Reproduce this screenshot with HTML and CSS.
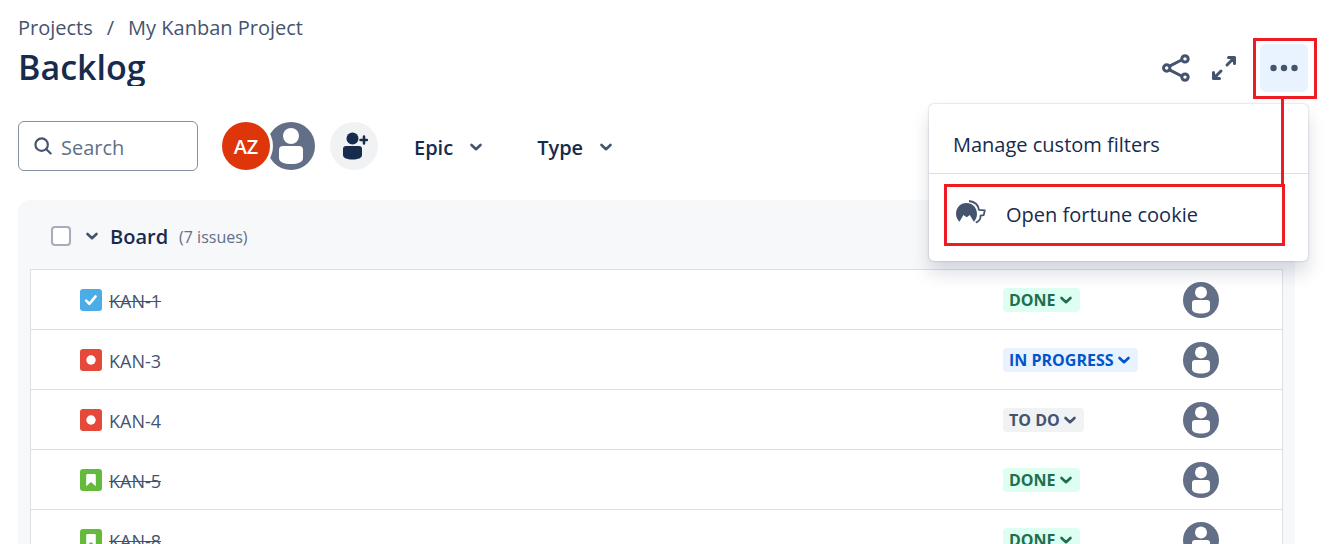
FILE: index.html
```html
<!DOCTYPE html>
<html lang="en">
<head>
<meta charset="utf-8">
<meta name="viewport" content="width=device-width, initial-scale=1">
<title>Backlog - My Kanban Project</title>
<link rel="stylesheet" href="styles.css">
</head>
<body>
<svg class="sprite" aria-hidden="true">
  <symbol id="chevron" viewBox="0 0 14 10"><path d="M2.5 3 7 7.2 11.5 3" fill="none" stroke="currentColor" stroke-width="2.6" stroke-linecap="round" stroke-linejoin="round"/></symbol>
  <symbol id="person" viewBox="0 0 48 48"><circle cx="24" cy="24" r="24" fill="#626f86"/><circle cx="24" cy="14" r="8" fill="#fff"/><path d="M16 24h16a4 4 0 0 1 4 4v8c0 4-5 6-12 6s-12-2-12-6v-8a4 4 0 0 1 4-4z" fill="#fff"/></symbol>
  <symbol id="task" viewBox="0 0 22 22"><rect width="22" height="22" rx="3" fill="#4bade8"/><path d="m6.2 11.6 3.2 3.2 6.2-7.4" fill="none" stroke="#fff" stroke-width="2.6" stroke-linecap="round" stroke-linejoin="round"/></symbol>
  <symbol id="bug" viewBox="0 0 22 22"><rect width="22" height="22" rx="3" fill="#e5493a"/><circle cx="11" cy="11" r="4.7" fill="#fff"/></symbol>
  <symbol id="story" viewBox="0 0 22 22"><rect width="22" height="22" rx="3" fill="#63ba3c"/><path d="M7.5 5h7a1.3 1.3 0 0 1 1.3 1.3V17.2L11 13l-4.8 4.2V6.3A1.3 1.3 0 0 1 7.5 5z" fill="#fff"/></symbol>
</svg>

<main class="page">
  <nav class="breadcrumbs" aria-label="Breadcrumbs">
    <a href="#">Projects</a><span>/</span><a href="#">My Kanban Project</a>
  </nav>

  <header class="header">
    <h1 class="title">Backlog</h1>
    <div class="actions">
      <button class="icon-button" aria-label="Share">
        <svg width="30" height="30" viewBox="0 0 30 30" fill="none" stroke="currentColor" stroke-width="3"><path d="M8 13.4 20.6 7M8 16.6 20.6 23"/><circle cx="5.7" cy="15" r="3.2"/><circle cx="24" cy="5.9" r="3.2"/><circle cx="24" cy="24.1" r="3.2"/></svg>
      </button>
      <button class="icon-button" aria-label="Full screen">
        <svg width="26" height="26" viewBox="0 0 26 26" fill="none" stroke="currentColor" stroke-width="3" stroke-linecap="round" stroke-linejoin="round"><path d="M17.500 2.500h6v6M23 3l-7 7M8.500 23.500h-6v-6M3 23l7-7"/><path d="M19 3h4v4zM3 19v4h4z" fill="currentColor" stroke-width="1"/></svg>
      </button>
      <div class="more">
        <button class="icon-button more-button" aria-label="More actions" aria-expanded="true">
          <svg width="28" height="8" viewBox="0 0 28 8" fill="currentColor"><circle cx="3.5" cy="4" r="3.2"/><circle cx="14" cy="4" r="3.2"/><circle cx="24.5" cy="4" r="3.2"/></svg>
        </button>
        <div class="menu">
          <button class="menu-item">Manage custom filters</button>
          <div class="menu-group">
            <button class="menu-item highlighted">
              <svg width="32" height="28" viewBox="0 -2 32 28"><path d="M4.500 19.700C2.500 18 1 15 1 12 1 5.500 5.500 1 11.500 1S22 5.500 22 12c0 3.200-1.200 5.800-3.200 7.700L14.800 13l-3.100 2.200L8.400 13z" fill="#44546f"/><path d="M14-1C19.500-.3 23.300 3 23.900 7.800l5.900.6-1.100 4.700-3.200.6c.3 3-1.500 5.800-4.700 7" fill="none" stroke="#44546f" stroke-width="1.800" stroke-linejoin="round"/></svg>
              <span>Open fortune cookie</span>
            </button>
          </div>
        </div>
      </div>
    </div>
  </header>

  <div class="toolbar">
    <label class="search">
      <svg width="18" height="18" viewBox="0 0 20 20" fill="none" stroke="currentColor" stroke-width="2.4" stroke-linecap="round"><circle cx="8.500" cy="8.500" r="6.900"/><path d="m13.700 13.700 4.800 4.600"/></svg>
      <input type="text" placeholder="Search" aria-label="Search">
    </label>
    <div class="avatars">
      <button class="avatar initials" aria-label="AZ">AZ</button>
      <button class="avatar stacked" aria-label="Unassigned"><svg width="48" height="48"><use href="#person"/></svg></button>
    </div>
    <button class="avatar add" aria-label="Add people">
      <svg width="28" height="28" viewBox="0 0 28 28" fill="currentColor"><circle cx="12.500" cy="6.500" r="6"/><path d="M6 14h13a3 3 0 0 1 3 3v6c0 3-4 4.500-9.500 4.500S3 26 3 23v-6a3 3 0 0 1 3-3z"/><path d="M24 4.500v7M20.500 8h6.500" stroke="currentColor" stroke-width="2.500" stroke-linecap="round"/></svg>
    </button>
    <div class="filters">
      <button class="filter">Epic <svg width="14" height="10"><use href="#chevron"/></svg></button>
      <button class="filter">Type <svg width="14" height="10"><use href="#chevron"/></svg></button>
    </div>
  </div>

  <section class="board">
    <div class="board-header">
      <input class="check" type="checkbox" aria-label="Select all board issues">
      <button class="collapse" aria-label="Collapse board"><svg width="14" height="10"><use href="#chevron"/></svg></button>
      <h2 class="board-title">Board</h2>
      <span class="count">(7 issues)</span>
    </div>
    <ul class="issues">
      <li class="issue">
        <svg width="22" height="22"><use href="#task"/></svg><a class="key closed" href="#">KAN-1</a>
        <div class="status-cell"><button class="status done">DONE <svg width="14" height="10"><use href="#chevron"/></svg></button></div>
        <svg class="assignee" width="36" height="36"><use href="#person"/></svg>
      </li>
      <li class="issue">
        <svg width="22" height="22"><use href="#bug"/></svg><a class="key" href="#">KAN-3</a>
        <div class="status-cell"><button class="status progress">IN PROGRESS <svg width="14" height="10"><use href="#chevron"/></svg></button></div>
        <svg class="assignee" width="36" height="36"><use href="#person"/></svg>
      </li>
      <li class="issue">
        <svg width="22" height="22"><use href="#bug"/></svg><a class="key" href="#">KAN-4</a>
        <div class="status-cell"><button class="status todo">TO DO <svg width="14" height="10"><use href="#chevron"/></svg></button></div>
        <svg class="assignee" width="36" height="36"><use href="#person"/></svg>
      </li>
      <li class="issue">
        <svg width="22" height="22"><use href="#story"/></svg><a class="key closed" href="#">KAN-5</a>
        <div class="status-cell"><button class="status done">DONE <svg width="14" height="10"><use href="#chevron"/></svg></button></div>
        <svg class="assignee" width="36" height="36"><use href="#person"/></svg>
      </li>
      <li class="issue">
        <svg width="22" height="22"><use href="#story"/></svg><a class="key closed" href="#">KAN-8</a>
        <div class="status-cell"><button class="status done">DONE <svg width="14" height="10"><use href="#chevron"/></svg></button></div>
        <svg class="assignee" width="36" height="36"><use href="#person"/></svg>
      </li>
    </ul>
  </section>
</main>
</body>
</html>
```
FILE: styles.css
```css
* { box-sizing: border-box; }

body {
  margin: 0;
  height: 100vh;
  overflow: hidden;
  background: #fff;
  color: #172b4d;
  font-family: "Open Sans", "Noto Sans", sans-serif;
  font-size: 20px;
}

button {
  margin: 0;
  padding: 0;
  border: 0;
  background: none;
  color: inherit;
  font: inherit;
}

a { color: inherit; text-decoration: none; }

svg { flex: none; display: block; }

.sprite { position: absolute; width: 0; height: 0; }

.page { padding: 14px 22px 0 18px; }

.breadcrumbs {
  display: flex;
  gap: 14px;
  line-height: 28px;
  color: #44546f;
}

.header {
  display: flex;
  justify-content: space-between;
  align-items: center;
  height: 48px;
  margin-top: 2px;
}

.title {
  margin: 0;
  height: 36px;
  overflow: hidden;
  font-size: 34px;
  font-weight: 600;
  line-height: 34px;
}

.actions { display: flex; color: #44546f; }

.icon-button {
  display: flex;
  align-items: center;
  justify-content: center;
  width: 48px;
  height: 48px;
  border-radius: 5px;
}

.more { position: relative; margin-left: 12px; }
.more-button { background: #e9f2ff; }

/* Callout frame around the open menu button */
.more::before {
  content: "";
  position: absolute;
  inset: -6px -9px -7px -7px;
  border: 3px solid #ed1c24;
  pointer-events: none;
}

/* Connector from the callout frame to the highlighted item */
.more::after {
  content: "";
  position: absolute;
  z-index: 3;
  top: 54px;
  right: 24px;
  width: 3px;
  height: 88px;
  background: #ed1c24;
}

.menu {
  position: absolute;
  z-index: 2;
  top: 60px;
  right: 0;
  width: 379px;
  padding-top: 12px;
  border-radius: 5px;
  background: #fff;
  color: #172b4d;
  box-shadow: 0 12px 18px rgba(9, 30, 66, 0.15), 0 0 2px rgba(9, 30, 66, 0.31);
}

.menu-item {
  display: flex;
  align-items: center;
  width: 100%;
  height: 57px;
  padding: 0 24px;
  text-align: left;
}

.menu-group {
  padding: 10px 23px 15px 15px;
  border-top: 1px solid #dcdfe4;
}

.highlighted {
  gap: 19px;
  height: 62px;
  padding: 0 8px 2px;
  border: 3px solid #ed1c24;
}

.toolbar { display: flex; align-items: center; margin-top: 29px; }

.search {
  display: flex;
  align-items: center;
  gap: 9px;
  width: 180px;
  height: 50px;
  padding: 0 15px;
  border: 1px solid #8590a2;
  border-radius: 6px;
  color: #44546f;
}

.search input {
  width: 100%;
  min-width: 0;
  padding: 2px 0 0;
  border: 0;
  outline: 0;
  background: none;
  color: #172b4d;
  font: inherit;
}

.search input::placeholder { color: #626f86; opacity: 1; }

.avatars { display: flex; margin: 0 15px 0 24px; }

.avatar {
  display: flex;
  align-items: center;
  justify-content: center;
  width: 48px;
  height: 48px;
  border-radius: 50%;
}

.initials {
  position: relative;
  z-index: 1;
  background: #de350b;
  box-shadow: 0 0 0 3px #fff;
  color: #fff;
  font-weight: 600;
}

.stacked { margin-left: -3px; }
.add { background: #f1f2f4; }

.filters { display: flex; gap: 54px; margin-left: 36px; padding-top: 2px; }

.filter {
  display: flex;
  align-items: center;
  gap: 16px;
  font-weight: 600;
}

.filter svg { color: #44546f; }

.board {
  margin: 29px 13px 0 0;
  padding: 0 12px 12px;
  border-radius: 12px;
  background: #f7f8f9;
}

.board-header {
  display: flex;
  align-items: center;
  height: 69px;
  padding: 3px 0 0 21px;
}

.check {
  appearance: none;
  width: 20px;
  height: 20px;
  margin: 0;
  border: 2px solid #a5adba;
  border-radius: 4px;
  background: #fff;
}

.collapse { margin: 0 11px 0 14px; color: #44546f; }

.board-title { margin: 0; font-size: 20px; font-weight: 600; }

.count { margin-left: 11px; padding-top: 2px; color: #626f86; font-size: 16px; }

.issues {
  margin: 0;
  padding: 0;
  list-style: none;
  border: 1px solid #dcdfe4;
  background: #fff;
}

.issue {
  display: flex;
  align-items: center;
  height: 60px;
  padding: 0 63px 0 49px;
  border-bottom: 1px solid #dcdfe4;
}

.key {
  flex: 1;
  margin-left: 7px;
  padding-top: 2px;
  color: #44546f;
  font-size: 18px;
  font-weight: 500;
}

.closed { text-decoration: line-through; }

.status-cell { width: 180px; }

.status {
  display: flex;
  align-items: center;
  gap: 3px;
  height: 24px;
  padding: 0 7px 0 6px;
  border-radius: 4px;
  font-size: 16px;
  font-weight: 700;
}

.done { background: #dcfff1; color: #216e4e; }
.progress { background: #e9f2ff; color: #0055cc; }
.todo { background: #f1f2f4; color: #44546f; }
```
